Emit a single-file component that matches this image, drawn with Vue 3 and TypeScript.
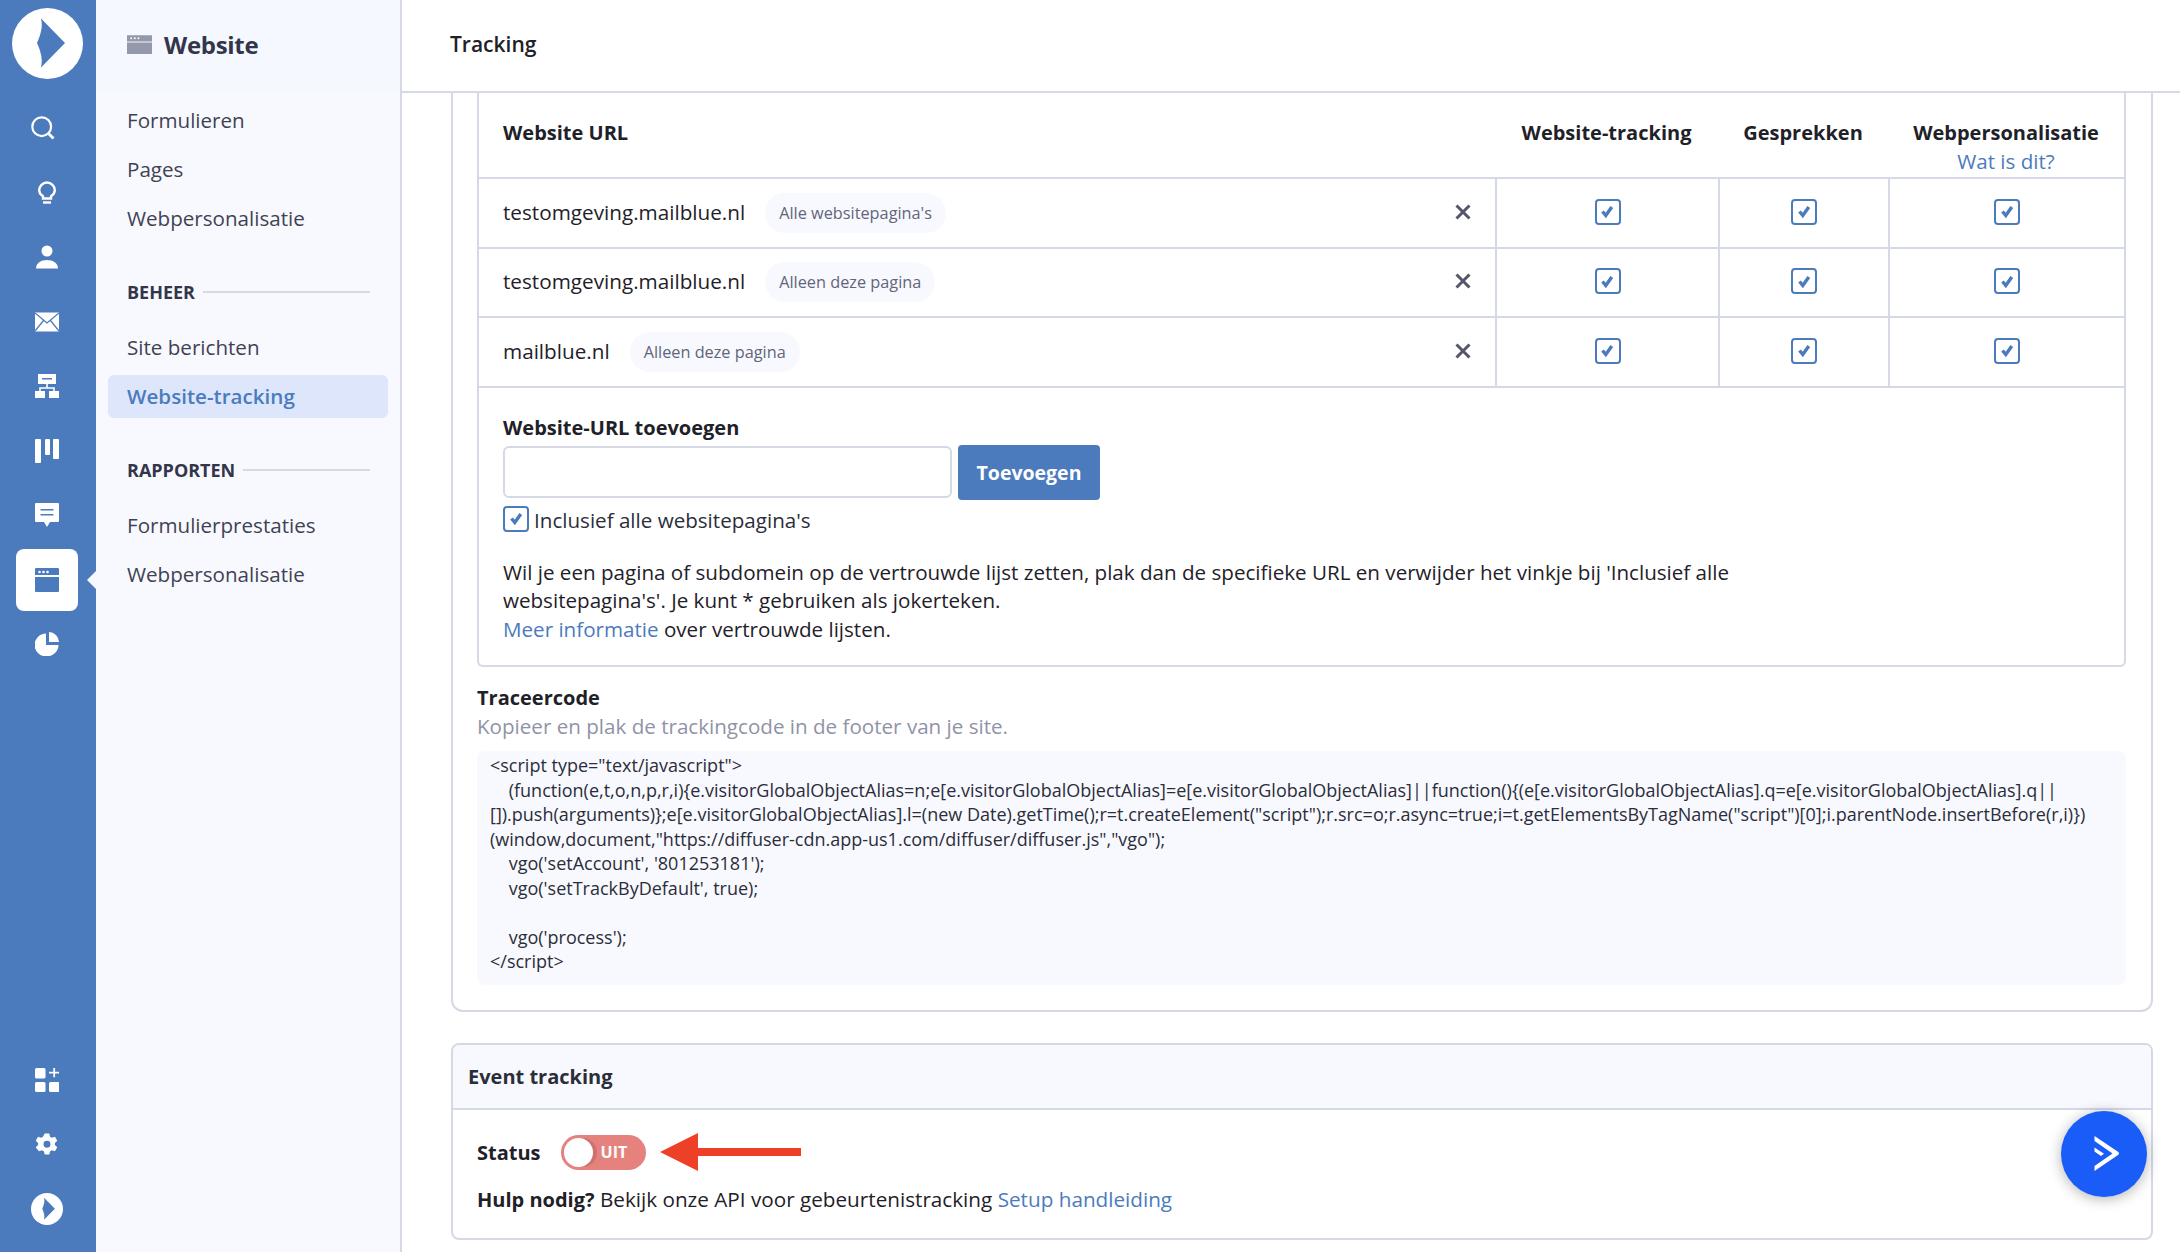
<script setup lang="ts">
interface Row { url: string; scope: string }
const rows: Row[] = [
  { url: 'testomgeving.mailblue.nl', scope: "Alle websitepagina's" },
  { url: 'testomgeving.mailblue.nl', scope: 'Alleen deze pagina' },
  { url: 'mailblue.nl', scope: 'Alleen deze pagina' },
]
const code = [
  '<script type="text/javascript">',
  '    (function(e,t,o,n,p,r,i){e.visitorGlobalObjectAlias=n;e[e.visitorGlobalObjectAlias]=e[e.visitorGlobalObjectAlias]||function(){(e[e.visitorGlobalObjectAlias].q=e[e.visitorGlobalObjectAlias].q||',
  '[]).push(arguments)};e[e.visitorGlobalObjectAlias].l=(new Date).getTime();r=t.createElement("script");r.src=o;r.async=true;i=t.getElementsByTagName("script")[0];i.parentNode.insertBefore(r,i)})',
  '(window,document,"https://diffuser-cdn.app-us1.com/diffuser/diffuser.js","vgo");',
  "    vgo('setAccount', '801253181');",
  "    vgo('setTrackByDefault', true);",
  '',
  "    vgo('process');",
  '<' + '/script>',
].join('\n')
const logoPath = 'M40 19 Q39.5 18 41 19.5 L64 43 L41 66.5 Q39.5 68 40 67 C42 60 40 52 36 43 C40 34 42 26 40 19 Z'
</script>

<template>
  <div class="app">
    <aside class="rail">
      <div class="logo">
        <svg viewBox="11 8 71 71" width="71" height="71"><circle cx="46.5" cy="43.5" r="35.5" fill="#fff"/><path :d="logoPath" fill="#4b7bbd"/></svg>
      </div>
      <nav class="rail-list">
        <div class="rail-item shift"><svg viewBox="0 0 24 24" width="24" height="24" fill="none" stroke="#fff"><circle cx="10.7" cy="10.7" r="9.4" stroke-width="2.2"/><path d="M17.5 17.5l5 5" stroke-width="2.8"/></svg></div>
        <div class="rail-item"><svg viewBox="0 0 24 24" width="24" height="24" fill="none" stroke="#fff" stroke-width="2.4"><path d="M8 17.5v-2.2C5.6 13.8 4.2 11.800 4.200 9.300a7.800 7.800 0 0 1 15.600 0c0 2.500-1.400 4.500-3.800 6v2.200z"/><path d="M8 21.500h8"/></svg></div>
        <div class="rail-item"><svg viewBox="0 0 24 24" width="24" height="24" fill="#fff"><circle cx="12" cy="6" r="5.500"/><path d="M1 23.500c0-5.500 5-8.500 11-8.500s11 3 11 8.500z"/></svg></div>
        <div class="rail-item"><svg viewBox="0 0 24 24" width="24" height="24"><path d="M0 2.500h24v19H0z" fill="#fff"/><path d="M0 3l12 10L24 3M0 21l8.500-10.500M24 21l-8.500-10.500" fill="none" stroke="#4b7bbd" stroke-width="1.300"/></svg></div>
        <div class="rail-item"><svg viewBox="0 0 24 24" width="24" height="24" fill="#fff"><path d="M3 0h18v10H3z"/><path d="M0 17h10v7H0zM14 17h10v7H14z"/><path d="M12 10v4M5 17v-3h14v3" fill="none" stroke="#fff" stroke-width="1.600"/><path d="M7 4h10v1.500H7z" fill="#4b7bbd"/></svg></div>
        <div class="rail-item"><svg viewBox="0 0 24 24" width="24" height="24" fill="#fff"><rect x="0" y="0" width="6" height="24" rx="1"/><rect x="10" y="0" width="5" height="16" rx="1"/><rect x="18" y="0" width="6" height="20" rx="1"/></svg></div>
        <div class="rail-item"><svg viewBox="0 0 24 24" width="24" height="24" fill="#fff"><path d="M1 0h22a1 1 0 0 1 1 1v17a1 1 0 0 1-1 1h-8l-3 5-3-5H1a1 1 0 0 1-1-1V1a1 1 0 0 1 1-1z"/><path d="M5.500 6h13v1.600h-13zM5.500 11h13v1.600h-13z" fill="#4b7bbd"/></svg></div>
        <div class="rail-item active"><svg viewBox="0 0 24 24" width="24" height="24" fill="#4b7bbd"><path d="M1 0h22a1 1 0 0 1 1 1v6H0V1a1 1 0 0 1 1-1zM0 9h24v14a1 1 0 0 1-1 1H1a1 1 0 0 1-1-1z"/><g fill="#fff"><circle cx="4.500" cy="4" r="1.300"/><circle cx="8.500" cy="4" r="1.300"/><circle cx="12.500" cy="4" r="1.300"/></g></svg></div>
        <div class="rail-item"><svg viewBox="0 0 24 24" width="24" height="24" fill="#fff"><path d="M11 1.500v11.500h12.500A12 11.500 0 1 1 11 1.500z"/><path d="M14 0a10.500 10.500 0 0 1 10 10h-10z"/></svg></div>
      </nav>
      <div class="rail-bottom">
        <div class="rail-item"><svg viewBox="0 0 24 24" width="24" height="24" fill="#fff"><rect x="0" y="0" width="10.500" height="10.500" rx="1.500"/><rect x="0" y="14" width="10.500" height="10" rx="1.500"/><rect x="14" y="14" width="10.500" height="10" rx="1.500"/><path d="M18.300 0h1.800v3.700H24v1.800h-3.900v3.800h-1.800V5.500H14V3.700h4.300z"/></svg></div>
        <div class="rail-item"><svg viewBox="0 0 24 24" width="22" height="23" fill="#fff"><path fill-rule="evenodd" d="M9.500 0h5l.8 3.500 2 1.100 3.400-1 2.500 4.300-2.600 2.500v2.200l2.600 2.500-2.500 4.300-3.400-1-2 1.100-.8 3.500h-5l-.8-3.500-2-1.100-3.400 1L-.3 15.100l2.600-2.500v-2.200L-.3 7.900l2.500-4.300 3.400 1 2-1.100zM12 8a3.800 3.800 0 1 0 0 7.600A3.800 3.800 0 0 0 12 8z"/></svg></div>
        <div class="rail-item"><svg viewBox="11 8 71 71" width="32" height="32"><circle cx="46.500" cy="43.500" r="35.500" fill="#fff"/><path :d="logoPath" fill="#4b7bbd"/></svg></div>
      </div>
    </aside>

    <aside class="panel">
      <header class="panel-head">
        <svg viewBox="0 0 24 18" width="25" height="19" fill="#9398ab"><path d="M0 0h24v6H0zM0 7h24v11H0z"/><g fill="#f5f8ff"><circle cx="4" cy="3" r="1"/><circle cx="7.500" cy="3" r="1"/><circle cx="11" cy="3" r="1"/></g></svg>
        <span class="panel-title">Website</span>
      </header>
      <div class="panel-nav">
        <a class="link">Formulieren</a>
        <a class="link">Pages</a>
        <a class="link">Webpersonalisatie</a>
        <div class="group first"><span>BEHEER</span><i></i></div>
        <a class="link">Site berichten</a>
        <a class="link current">Website-tracking</a>
        <div class="group second"><span>RAPPORTEN</span><i></i></div>
        <a class="link">Formulierprestaties</a>
        <a class="link">Webpersonalisatie</a>
      </div>
    </aside>

    <main class="main">
      <header class="top"><h1>Tracking</h1></header>
      <div class="content">
        <section class="card">
          <div class="urls">
            <div class="tbl head">
              <div class="cell name"><b>Website URL</b></div>
              <div class="cell mid"><b>Website-tracking</b></div>
              <div class="cell mid"><b>Gesprekken</b></div>
              <div class="cell mid"><b>Webpersonalisatie</b><a class="blue">Wat is dit?</a></div>
            </div>
            <div v-for="(r, i) in rows" :key="i" class="tbl row">
              <div class="cell name">
                <span class="url">{{ r.url }}</span>
                <span class="pill">{{ r.scope }}</span>
                <svg class="x" viewBox="0 0 16 16" width="16" height="16"><path d="M1.500 1.500l13 13M14.500 1.500l-13 13" stroke="#54566a" stroke-width="3" fill="none"/></svg>
              </div>
              <div v-for="c in 3" :key="c" class="cell mid boxed">
                <span class="check"><svg viewBox="0 0 25 25" width="25" height="25"><path d="M7.500 12.500l3.300 4 6-8.500" fill="none" stroke="#4b7bbd" stroke-width="3.400"/></svg></span>
              </div>
            </div>
            <div class="add">
              <label class="add-label">Website-URL toevoegen</label>
              <div class="add-row">
                <input class="input" type="text" />
                <button class="btn" type="button">Toevoegen</button>
              </div>
              <div class="incl">
                <span class="check"><svg viewBox="0 0 25 25" width="25" height="25"><path d="M7.500 12.500l3.300 4 6-8.500" fill="none" stroke="#4b7bbd" stroke-width="3.400"/></svg></span>
                <span class="incl-text">Inclusief alle websitepagina's</span>
              </div>
              <p class="note">Wil je een pagina of subdomein op de vertrouwde lijst zetten, plak dan de specifieke URL en verwijder het vinkje bij 'Inclusief alle<br />websitepagina's'. Je kunt * gebruiken als jokerteken.<br /><a class="blue">Meer informatie</a> over vertrouwde lijsten.</p>
            </div>
          </div>
          <h2 class="trace">Traceercode</h2>
          <p class="sub">Kopieer en plak de trackingcode in de footer van je site.</p>
          <pre class="code">{{ code }}</pre>
        </section>

        <section class="event">
          <header class="event-head">Event tracking</header>
          <div class="event-body">
            <div class="status">
              <b>Status</b>
              <span class="toggle"><span class="knob"></span><span class="off">UIT</span></span>
              <svg class="arrow" viewBox="0 0 141 38" width="141" height="38"><path d="M0 19 38 0v15h103v8H38v15z" fill="#ee4027"/></svg>
            </div>
            <p class="help"><b>Hulp nodig?</b> Bekijk onze API voor gebeurtenistracking <a class="blue">Setup handleiding</a></p>
          </div>
        </section>
      </div>
    </main>

    <button class="chat" type="button" aria-label="Chat">
      <svg viewBox="0 0 26 36" width="26" height="36" fill="#fff"><path d="M1.500 0 25 15.700a2 2 0 0 1 0 3.400L1.500 35v-5L19.500 17.500 1.500 5z"/><path d="M1.500 11.500l9.500 6.300-3 2.200-6.500-4.500z"/></svg>
    </button>
  </div>
</template>

<style>
html, body { margin: 0; background: #fff; }
</style>

<style scoped>
.app { display: flex; width: 2180px; height: 1252px; overflow: hidden; position: relative; font-family: "Open Sans", "Liberation Sans", sans-serif; color: #1f2129; font-size: 20.600px; }
.rail { width: 96px; flex: none; background: #4b7bbd; display: flex; flex-direction: column; box-sizing: border-box; padding: 8px 2px 11px 0; }
.logo { height: 88px; display: flex; justify-content: center; align-items: flex-start; flex: none; }
.rail-list { display: flex; flex-direction: column; }
.rail-bottom { margin-top: auto; display: flex; flex-direction: column; }
.rail-item { height: 64.500px; display: flex; align-items: center; justify-content: center; position: relative; }
.rail-item.shift svg { margin-left: -8px; }
.rail-item.active::before { content: ""; position: absolute; left: 16px; right: 16px; top: 1px; bottom: 1px; background: #fff; border-radius: 8px; }
.rail-item.active::after { content: ""; position: absolute; right: -2px; top: 50%; margin-top: -9px; border: 9px solid transparent; border-right-color: #f8f9fe; border-left-width: 0; }
.rail-item.active svg { position: relative; }
.panel { width: 306px; flex: none; background: #f8f9fe; border-right: 2px solid #d5d9e6; box-sizing: border-box; }
.panel-head { height: 92px; background: #f5f8ff; display: flex; align-items: center; padding: 0 0 3px 31px; gap: 12px; box-sizing: border-box; }
.panel-title { font-size: 24px; font-weight: 700; color: #33364a; letter-spacing: -0.300px; }
.panel-nav { display: flex; flex-direction: column; padding: 7px 12px 0; }
.link { height: 49px; line-height: 43px; box-sizing: border-box; padding-left: 19px; color: #3f4254; border-radius: 6px; flex: none; }
.link.current { height: 43px; background: #dde6fb; color: #4b7bbd; font-weight: 600; margin-top: 0.500px; }
.group { display: flex; align-items: center; gap: 8px; padding: 0 18px 0 19px; font-size: 18px; font-weight: 700; color: #33364a; height: 30px; flex: none; }
.group i { flex: 1; height: 2px; background: #d5d9e6; }
.group.first { margin-top: 31px; margin-bottom: 18.500px; }
.group.second { margin-top: 37px; margin-bottom: 18.500px; }
.main { flex: 1; min-width: 0; display: flex; flex-direction: column; }
.top { height: 93px; box-sizing: border-box; border-bottom: 2px solid #d5d9e6; display: flex; align-items: center; padding: 0 0 3px 48px; flex: none; }
.top h1 { margin: 0; font-size: 21px; font-weight: 600; color: #1f2129; }
.content { padding: 0 27px 0 49px; }
.card { border: 2px solid #d5d9e6; border-top: 0; border-radius: 0 0 12px 12px; padding: 0 25px 25px 24px; }
.urls { border: 2px solid #d5d9e6; border-top: 0; border-radius: 0 0 6px 6px; }
.tbl { display: grid; grid-template-columns: 1016px 223px 170px 1fr; border-bottom: 2px solid #d5d9e6; box-sizing: border-box; }
.head { height: 86px; }
.row { height: 69.500px; }
.row .cell { padding-bottom: 2px; }
.cell { display: flex; align-items: center; min-width: 0; }
.name { padding: 0 24px; gap: 20px; }
.mid { flex-direction: column; justify-content: center; }
.head .cell { justify-content: flex-start; padding-top: 26px; line-height: 28px; align-items: center; }
.head .name { align-items: flex-start; }
.head b { font-weight: 700; font-size: 20px; }
.boxed { border-left: 2px solid #d5d9e6; }
.url { font-size: 20.700px; color: #1f2129; }
.pill { background: #f8f9fe; border-radius: 20px; height: 40px; line-height: 40px; padding: 0 14px; margin-top: 2px; font-size: 16.300px; color: #62657a; }
.x { margin-left: auto; }
.check { width: 26px; height: 26px; box-sizing: border-box; border: 2px solid #4b7bbd; border-radius: 4px; display: flex; align-items: center; justify-content: center; flex: none; }
.check svg { flex: none; margin: -2px; }
.blue { color: #4b7bbd; }
.add { padding: 26px 24px 22px; }
.add-label { display: block; font-weight: 700; line-height: 28px; font-size: 20px; margin-bottom: 3px; }
.add-row { display: flex; gap: 6px; align-items: center; }
.input { width: 449px; height: 52px; box-sizing: border-box; border: 2px solid #d5d9e6; border-radius: 6px; background: #fff; outline: none; }
.btn { width: 142px; height: 55px; background: #4b7bbd; color: #fff; font: 700 19.500px "Open Sans", sans-serif; border: 0; border-radius: 4px; }
.incl { display: flex; align-items: center; gap: 5px; margin-top: 6px; height: 26px; color: #2b2d3a; }
.incl-text { padding-top: 3px; }
.note { margin: 26px 0 0; line-height: 28.500px; color: #1f2129; }
.trace { margin: 17px 0 0; font-size: 20px; font-weight: 700; line-height: 28px; }
.sub { margin: 0; line-height: 28px; color: #8f93a8; }
.code { margin: 11px 0 0; background: #f8f9fe; border-radius: 8px; height: 234px; box-sizing: border-box; padding: 2px 13px 10px; font: 18px/24.500px "Open Sans", sans-serif; color: #2b2d3a; white-space: pre; overflow: hidden; }
.event { margin-top: 31px; border: 2px solid #d5d9e6; border-radius: 8px; }
.event-head { height: 65px; box-sizing: border-box; background: #f8f9fe; border-bottom: 2px solid #d5d9e6; border-radius: 6px 6px 0 0; padding-left: 15px; display: flex; align-items: center; font-weight: 700; font-size: 20px; color: #2b2d3a; }
.event-body { padding: 23px 25px 24px 24px; }
.status { display: flex; align-items: center; height: 38px; }
.status b { font-weight: 700; font-size: 20px; margin-right: 20px; }
.toggle { width: 85px; height: 35px; border-radius: 18px; background: #e5827e; display: flex; align-items: center; position: relative; flex: none; }
.knob { position: absolute; left: 3px; top: 3px; width: 29px; height: 29px; border-radius: 50%; background: #fff; box-shadow: 4px 0 0 #cc7270; }
.off { position: absolute; left: 40px; top: 0; line-height: 35px; font-size: 16px; font-weight: 700; color: #fff; }
.arrow { margin-left: 14px; flex: none; }
.help { margin: 14px 0 0; line-height: 28px; font-size: 20.700px; }
.help b { font-weight: 700; font-size: 20px; }
.chat { position: absolute; left: 2061px; top: 1111px; width: 86px; height: 86px; border-radius: 50%; border: 0; background: #1a5cf8; box-shadow: 0 2px 14px rgba(0,0,0,.3); display: flex; align-items: center; justify-content: center; padding: 0 0 0 4px; }
</style>
